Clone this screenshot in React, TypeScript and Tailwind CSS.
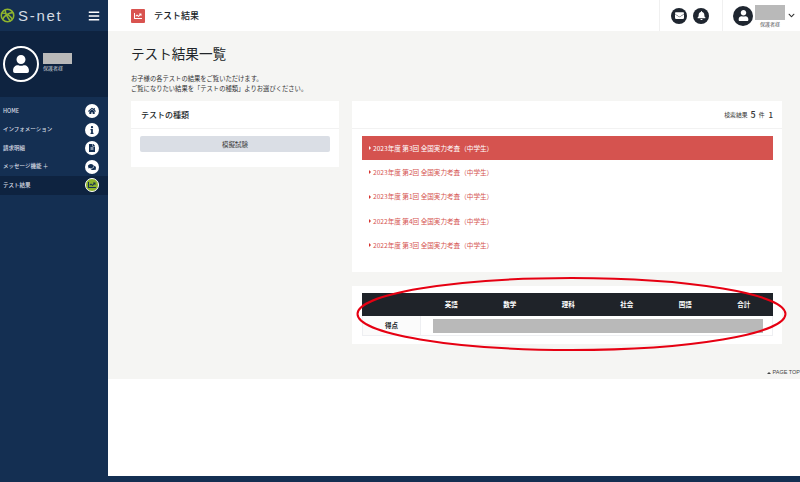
import { FaBars, FaBell, FaChartLine, FaChevronDown, FaComments, FaEnvelope, FaFileAlt, FaHome, FaInfo, FaUser } from 'react-icons/fa';

const jp = { fontFamily: '"Noto Sans CJK JP", "Liberation Sans", sans-serif' };

const navItems = [
  { label: 'HOME', icon: FaHome },
  { label: 'インフォメーション', icon: FaInfo },
  { label: '請求明細', icon: FaFileAlt },
  { label: 'メッセージ機能 ＋', icon: FaComments },
  { label: 'テスト結果', icon: FaChartLine, active: true },
];

const results = [
  '2023年度 第3回 全国実力考査（中学生）',
  '2023年度 第2回 全国実力考査（中学生）',
  '2023年度 第1回 全国実力考査（中学生）',
  '2022年度 第4回 全国実力考査（中学生）',
  '2022年度 第3回 全国実力考査（中学生）',
];

const subjects = ['英語', '数学', '理科', '社会', '国語', '合計'];

function Logo() {
  return (
    <svg viewBox="0 0 24 24" className="h-[15px] w-[15px] shrink-0" fill="none" stroke="#8fb52e" strokeWidth="2.5">
      <circle cx="12" cy="12" r="10" />
      <path d="M3 8c6 0 12 3 17 10M21 7C15 8 8 11 4 18M8 3c1 6 4 13 9 18" />
    </svg>
  );
}

export default function App() {
  return (
    <div className="relative flex h-[482px] w-[800px] overflow-hidden bg-white text-[#212529]" style={jp}>
      <aside className="flex w-[108px] shrink-0 flex-col bg-[#142f52]">
        <div className="flex h-[31px] items-center pr-[8px]">
          <Logo />
          <span className="ml-[3px] text-[15px] leading-none tracking-[1.7px] text-[#d5dbe3]" style={{ fontFamily: '"Liberation Sans", sans-serif' }}>
            S-net
          </span>
          <FaBars className="ml-auto h-[12px] w-[12px] text-white" />
        </div>

        <div className="flex h-[66px] items-center bg-[#0e2340] pl-[3px]">
          <div className="flex h-[36px] w-[36px] items-center justify-center rounded-full border-2 border-white bg-[#10233d]">
            <FaUser className="h-[18px] w-[18px] text-white" />
          </div>
          <div className="mb-[4px] ml-[4px]">
            <div className="h-[11px] w-[29px] bg-[#b9b9b9]" />
            <div className="mt-[1px] text-[5px] leading-[6px] text-[#ccd3dc]">保護者様</div>
          </div>
        </div>

        <nav className="mt-[5px] flex flex-col">
          {navItems.map((item) => (
            <div
              key={item.label}
              className={`flex h-[18.500px] items-center justify-between pl-[3px] pr-[9px] ${item.active ? 'bg-[#0e2340]' : ''}`}
            >
              <span className="text-[5.500px] font-medium leading-none text-[#d9dee5]">{item.label}</span>
              <div
                className={`flex h-[14px] w-[14px] items-center justify-center rounded-full ${
                  item.active ? 'border border-white bg-[#8db32c] text-[#142f52]' : 'bg-white text-[#142f52]'
                }`}
              >
                <item.icon className="h-[8px] w-[8px]" />
              </div>
            </div>
          ))}
        </nav>
      </aside>

      <div className="flex min-w-0 flex-1 flex-col">
        <header className="flex h-[31px] shrink-0 items-center bg-white">
          <div className="ml-[23px] flex h-[14px] w-[14px] items-center justify-center rounded-[1px] bg-[#d9534f]">
            <FaChartLine className="h-[8px] w-[8px] text-white" />
          </div>
          <span className="ml-[9px] text-[9px] font-medium leading-none">テスト結果</span>

          <div className="ml-auto flex h-full w-[63px] items-center border-l border-[#f0f0f0] pl-[11px]">
            <div className="flex h-[16px] w-[16px] items-center justify-center rounded-full bg-[#1f2630]">
              <FaEnvelope className="h-[9px] w-[9px] text-white" />
            </div>
            <div className="ml-[6px] flex h-[16px] w-[16px] items-center justify-center rounded-full bg-[#1f2630]">
              <FaBell className="h-[9px] w-[9px] text-white" />
            </div>
          </div>
          <div className="flex h-full w-[78px] items-center border-l border-[#f0f0f0] pl-[10px]">
            <div className="flex h-[20px] w-[20px] items-center justify-center rounded-full bg-[#1f2630]">
              <FaUser className="h-[11px] w-[11px] text-white" />
            </div>
            <div className="ml-[2px]">
              <div className="h-[15px] w-[30px] bg-[#b9b9b9]" />
              <div className="mt-[1px] text-center text-[5px] leading-[6px] text-[#555]">保護者様</div>
            </div>
            <FaChevronDown className="ml-[3px] h-[7px] w-[7px] text-[#333]" />
          </div>
        </header>

        <main className="h-[348px] shrink-0 bg-[#f5f5f3] pl-[23px] pr-[18px]">
          <h1 className="mt-[12px] text-[13.600px] font-normal leading-[20px]">テスト結果一覧</h1>
          <p className="mt-[11px] text-[6.300px] leading-[10px] text-[#333]">
            お子様の各テストの結果をご覧いただけます。
            <br />
            ご覧になりたい結果を「テストの種類」よりお選びください。
          </p>

          <div className="mt-[7px] flex items-start gap-[13px]">
            <section className="h-[66px] w-[208px] shrink-0 bg-white">
              <div className="flex h-[28px] items-center border-b border-[#f2f2f2] px-[10px] text-[8px] font-medium leading-none">
                テストの種類
              </div>
              <div className="px-[9px] pt-[7px]">
                <div className="flex h-[16px] items-center justify-center rounded-[2px] bg-[#dadee5] text-[6.500px] leading-none text-[#444]">
                  模擬試験
                </div>
              </div>
            </section>

            <div className="flex min-w-0 flex-1 flex-col">
              <section className="h-[171px] bg-white">
                <div className="flex h-[28px] items-center justify-end gap-[3px] border-b border-[#f2f2f2] pr-[9px] text-[5.800px] leading-none text-[#333]">
                  <span>検索結果</span>
                  <span className="text-[9px] font-medium">5</span>
                  <span>件</span>
                  <span className="ml-[1px] text-[8px] font-medium">1</span>
                </div>
                <div className="pl-[10px] pr-[9px] pt-[7px]">
                  {results.map((result, i) => (
                    <div
                      key={i}
                      className={`flex h-[24.300px] items-center pl-[7px] text-[6.600px] leading-none ${
                        i === 0 ? 'bg-[#d5534f] text-white' : 'text-[#d5534f]'
                      }`}
                    >
                      <span className={`mr-[2px] h-0 w-0 border-y-[2px] border-l-[2.500px] border-y-transparent ${i === 0 ? 'border-l-white' : 'border-l-[#d5312d]'}`} />
                      {result}
                    </div>
                  ))}
                </div>
              </section>

              <section className="mt-[14px] h-[58px] bg-white pl-[10px] pr-[9px] pt-[7px]">
                <div className="flex h-[23px] items-center bg-[#1f2329] text-[6.500px] font-bold leading-none text-white">
                  <div className="w-[60px]" />
                  {subjects.map((subject) => (
                    <div key={subject} className="flex-1 text-center">
                      {subject}
                    </div>
                  ))}
                </div>
                <div className="flex h-[20px] border-x border-b border-[#eeeff2]">
                  <div className="flex w-[58px] shrink-0 items-center justify-center border-r border-[#eeeff2] bg-[#fbfbfb] text-[6.500px] font-bold leading-none">
                    得点
                  </div>
                  <div className="flex flex-1 items-center pl-[12px] pr-[9px]">
                    <div className="h-[14px] w-full bg-[#b9b9b9]" />
                  </div>
                </div>
              </section>
            </div>
          </div>

          <div className="mr-[-18px] mt-[26px] flex items-center justify-end text-[5.500px] leading-none text-[#444]" style={{ fontFamily: '"Liberation Sans", sans-serif' }}>
            <span className="mr-[1px] h-0 w-0 border-x-[2px] border-b-[2.500px] border-x-transparent border-b-[#444]" />
            PAGE TOP
          </div>
        </main>

        <div className="flex-1 bg-white" />
        <footer className="h-[6px] shrink-0 bg-[#142f52]" />
      </div>

      <svg viewBox="0 0 800 482" className="pointer-events-none absolute inset-0 h-[482px] w-[800px]" fill="none">
        <ellipse cx="571.500" cy="314" rx="214" ry="36" stroke="#e60012" strokeWidth="2" />
      </svg>
    </div>
  );
}
